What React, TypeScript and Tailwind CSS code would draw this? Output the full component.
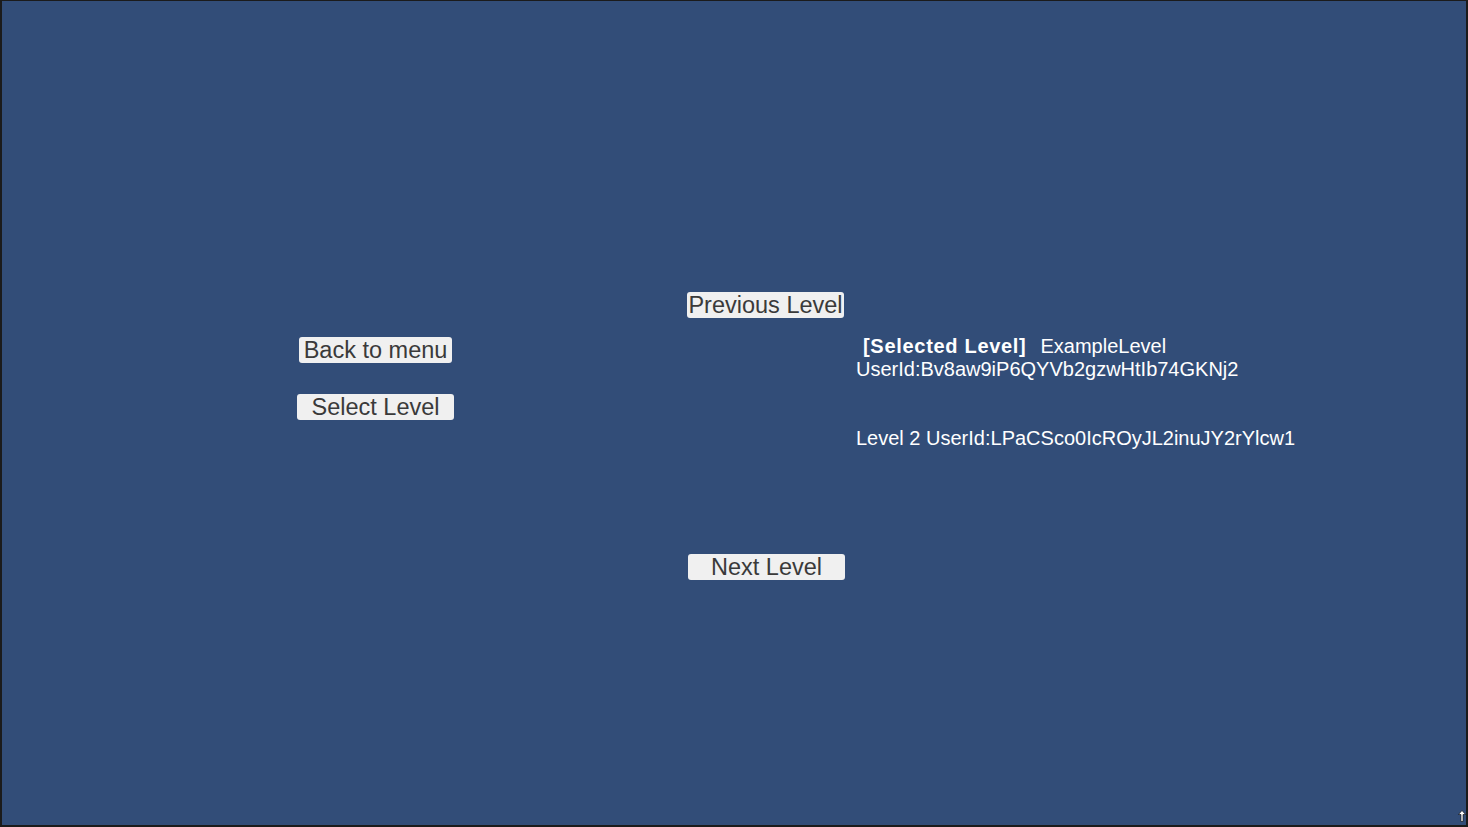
const font = { fontFamily: '"Liberation Sans", Arial, sans-serif' };

function UnityButton({ label, width }: { label: string; width: string }) {
	return (
		<button
			className={`flex h-[26px] ${width} items-center justify-center whitespace-nowrap rounded-[3px] bg-[#f0f0f0] pt-[2px] text-[23.5px] leading-none text-[#3a3a3a]`}
		>
			{label}
		</button>
	);
}

export default function App() {
	return (
		<div
			className="relative flex h-[827px] w-full flex-col border-t border-r-2 border-b-2 border-l-2 border-[#1b1b1b] bg-[#324d78]"
			style={font}
		>
			<div className="flex pt-[291px]">
				{/* left column */}
				<div className="ml-[295px] flex w-[157px] flex-col items-center gap-[31px] pt-[45px]">
					<UnityButton label="Back to menu" width="w-[153px]" />
					<UnityButton label="Select Level" width="w-[157px]" />
				</div>

				{/* middle column */}
				<div className="ml-[233px] flex w-[158px] flex-col items-start gap-[236px]">
					<UnityButton label="Previous Level" width="w-[157px]" />
					<div className="pl-[1px]">
						<UnityButton label="Next Level" width="w-[157px]" />
					</div>
				</div>

				{/* level list */}
				<div className="ml-[11px] flex flex-col pt-[43px] text-[20px] leading-[23px] text-white">
					<div className="whitespace-nowrap">
						<span className="ml-[7px] font-bold tracking-[0.7px]">[Selected Level]</span>
						<span className="ml-[14px]">ExampleLevel</span>
					</div>
					<div className="whitespace-nowrap">UserId:Bv8aw9iP6QYVb2gzwHtIb74GKNj2</div>
					<div className="mt-[46px] whitespace-nowrap">Level 2 UserId:LPaCSco0IcROyJL2inuJY2rYlcw1</div>
				</div>
			</div>

			{/* resize cursor */}
			<svg className="absolute right-[0px] bottom-[3px] h-[12px] w-[8px]" viewBox="0 0 8 12" aria-hidden="true">
				<path d="M4 0.5L7.5 4.5H5V11.5H3V4.5H0.5z" fill="#ffffff" stroke="#000" strokeWidth="0.6" />
			</svg>
		</div>
	);
}
